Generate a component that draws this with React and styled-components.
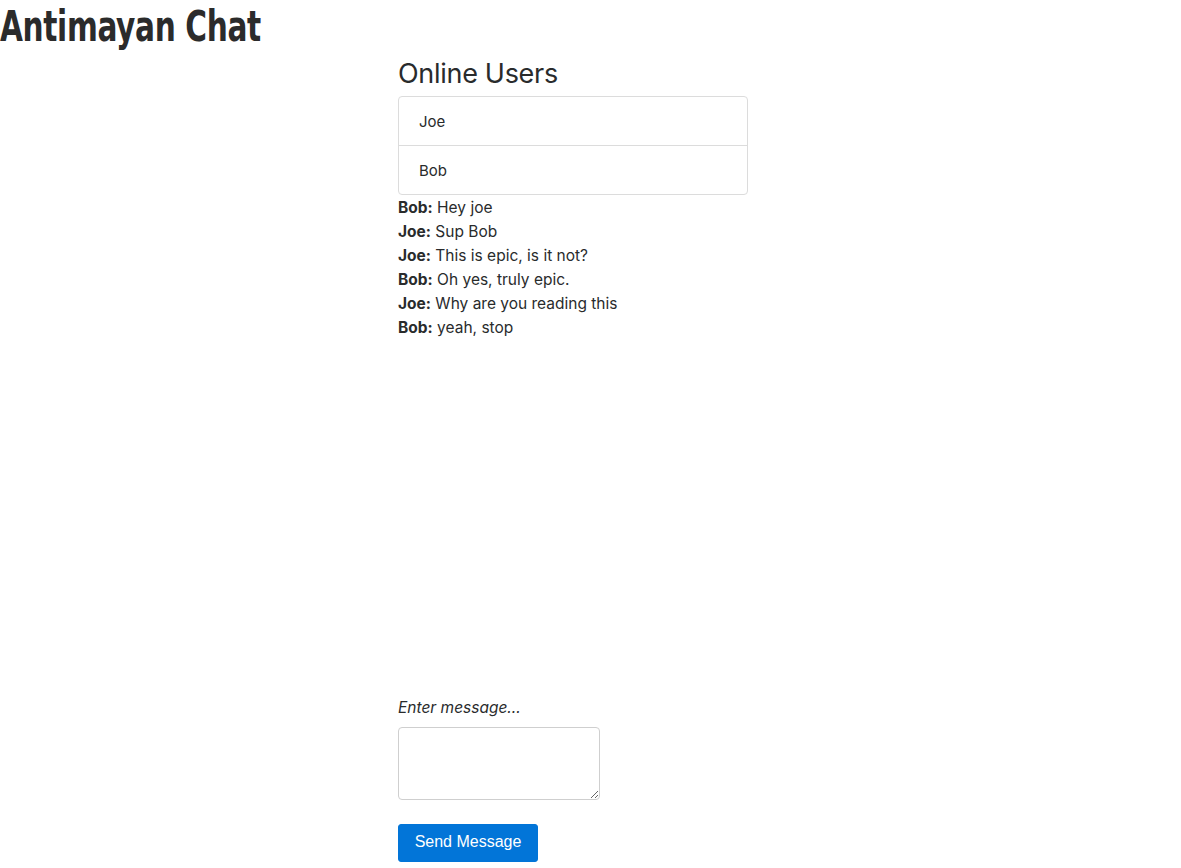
import styled, { createGlobalStyle } from 'styled-components';

const GlobalStyle = createGlobalStyle`
  html, body {
    margin: 0;
    padding: 0;
    background: #fff;
  }
  body {
    font-family: Inter, "Liberation Sans", sans-serif;
    font-size: 16px;
    line-height: 24px;
    color: #292b2c;
  }
`

const Title = styled.h1`
  margin: 0;
  height: 54px;
  font-family: "DejaVu Sans", sans-serif;
  font-weight: 700;
  font-size: 42px;
  line-height: 54px;
  letter-spacing: -0.5px;
  color: #2b2b2b;
  white-space: nowrap;

  span {
    display: inline-block;
    transform: scaleX(0.705);
    transform-origin: left center;
  }
`

const Column = styled.main`
  margin-left: 398px;
  width: 350px;
`

const Heading = styled.h3`
  margin: 4px 0 6px;
  font-weight: 400;
  font-size: 27px;
  line-height: 32px;
  letter-spacing: -0.3px;
`

const UserList = styled.ul`
  list-style: none;
  margin: 0;
  padding: 0;
  border: 1px solid #dcdcdc;
  border-radius: 4px;
`

const User = styled.li`
  padding: 13px 20px 11px;
  height: 24px;
  font-size: 15px;
  & + & {
    border-top: 1px solid #dcdcdc;
  }
`

const Messages = styled.div`
  height: 499px;
  padding-top: 1px;
  font-size: 15.5px;
`

const Line = styled.div`
  line-height: 24px;
  strong {
    font-weight: 700;
  }
`

const Form = styled.form`
  display: flex;
  flex-direction: column;
  align-items: flex-start;
`

const Label = styled.label`
  font-style: italic;
  font-size: 15.5px;
  margin: 1px 0 7px;
`

const TextArea = styled.textarea`
  box-sizing: border-box;
  width: 202px;
  height: 73px;
  border: 1px solid #cfcfcf;
  border-radius: 4px;
  margin-bottom: 24px;
  font-family: inherit;
`

const Button = styled.button`
  box-sizing: border-box;
  width: 140px;
  height: 38px;
  padding: 0 0 2px;
  background: #0275d8;
  border: 1px solid #0275d8;
  border-radius: 3px;
  color: #fff;
  font-family: "Liberation Sans", Arial, sans-serif;
  font-size: 16px;
  cursor: pointer;
`

const messages = [
  { from: 'Bob', text: 'Hey joe' },
  { from: 'Joe', text: 'Sup Bob' },
  { from: 'Joe', text: 'This is epic, is it not?' },
  { from: 'Bob', text: 'Oh yes, truly epic.' },
  { from: 'Joe', text: 'Why are you reading this' },
  { from: 'Bob', text: 'yeah, stop' },
]

const App = () => (
  <>
    <GlobalStyle />
    <Title><span>Antimayan Chat</span></Title>
    <Column>
      <Heading>Online Users</Heading>
      <UserList>
        <User>Joe</User>
        <User>Bob</User>
      </UserList>
      <Messages>
        {messages.map((m, i) => (
          <Line key={i}><strong>{m.from}:</strong> {m.text}</Line>
        ))}
      </Messages>
      <Form onSubmit={e => e.preventDefault()}>
        <Label>Enter message...</Label>
        <TextArea />
        <Button type="submit">Send Message</Button>
      </Form>
    </Column>
  </>
)

export default App;
